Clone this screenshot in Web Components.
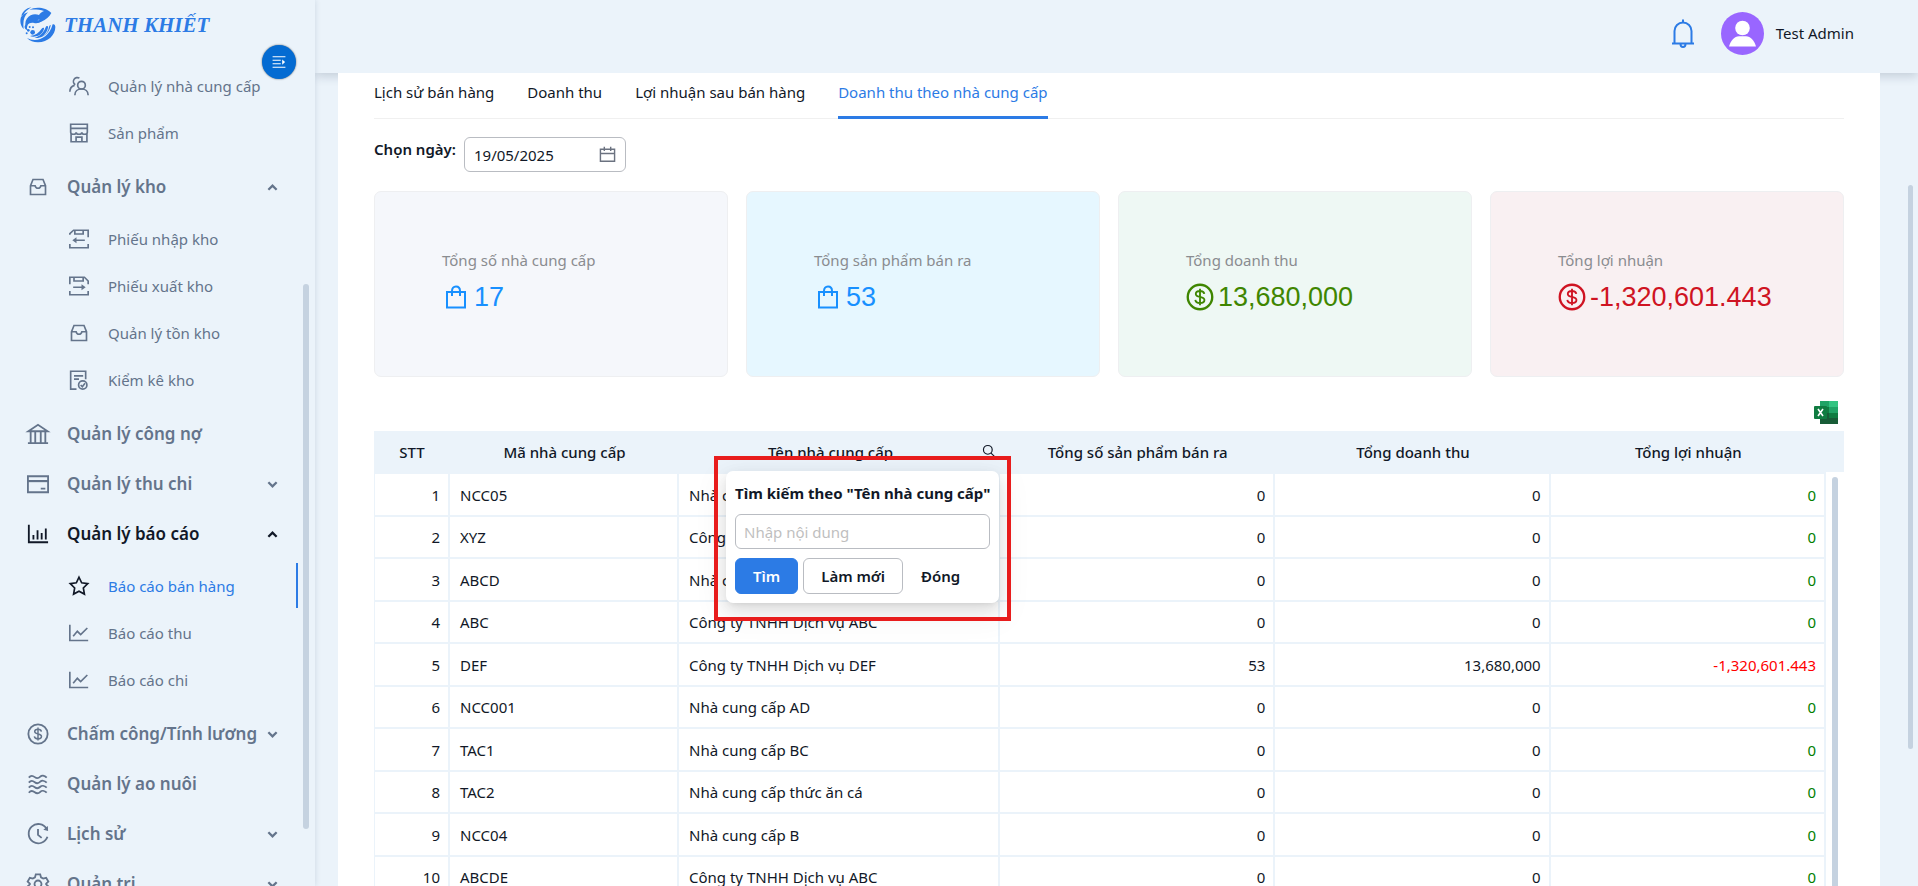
<!DOCTYPE html>
<html lang="vi">
<head>
<meta charset="utf-8">
<meta name="viewport" content="width=device-width, initial-scale=1">
<title>Doanh thu theo nhà cung cấp</title>
<style>
  body {
    margin: 0;
    font: 15px/22px "Noto Sans", "Open Sans", sans-serif;
    color: #111827;
    background: #ebf3fa;
  }
</style>
</head>
<body>
<app-shell>
  <app-sidebar slot="sidebar">
    <nav-item sub icon="team">Quản lý nhà cung cấp</nav-item>
    <nav-item sub icon="shop">Sản phẩm</nav-item>
    <nav-item icon="inbox" arrow="up">Quản lý kho</nav-item>
    <nav-item sub first icon="import">Phiếu nhập kho</nav-item>
    <nav-item sub icon="export">Phiếu xuất kho</nav-item>
    <nav-item sub icon="inbox">Quản lý tồn kho</nav-item>
    <nav-item sub icon="audit">Kiểm kê kho</nav-item>
    <nav-item icon="bank">Quản lý công nợ</nav-item>
    <nav-item icon="card" arrow="down">Quản lý thu chi</nav-item>
    <nav-item icon="bars" arrow="up" open>Quản lý báo cáo</nav-item>
    <nav-item sub first active icon="star">Báo cáo bán hàng</nav-item>
    <nav-item sub icon="line">Báo cáo thu</nav-item>
    <nav-item sub icon="line">Báo cáo chi</nav-item>
    <nav-item icon="dollar" arrow="down">Chấm công/Tính lương</nav-item>
    <nav-item icon="waves">Quản lý ao nuôi</nav-item>
    <nav-item icon="history" arrow="down">Lịch sử</nav-item>
    <nav-item icon="setting" arrow="down">Quản trị</nav-item>
  </app-sidebar>
  <app-header slot="header">Test Admin</app-header>

  <report-tabs>
    <a href="#history">Lịch sử bán hàng</a>
    <a href="#revenue">Doanh thu</a>
    <a href="#profit">Lợi nhuận sau bán hàng</a>
    <a href="#supplier" aria-current="page">Doanh thu theo nhà cung cấp</a>
  </report-tabs>
  <date-field value="19/05/2025">Chọn ngày</date-field>
  <stat-row>
    <stat-card icon="bag" value="17" tone="gray">Tổng số nhà cung cấp</stat-card>
    <stat-card icon="bag" value="53" tone="blue">Tổng sản phẩm bán ra</stat-card>
    <stat-card icon="dollar" value="13,680,000" tone="green">Tổng doanh thu</stat-card>
    <stat-card icon="dollar" value="-1,320,601.443" tone="red">Tổng lợi nhuận</stat-card>
  </stat-row>
  <supplier-table>
    <search-popup slot="search">Tên nhà cung cấp</search-popup>
  </supplier-table>
</app-shell>

<script>
  // 24x24 line icons
  const ICONS = {
    team: '<circle cx="15" cy="11" r="4.6"/><path d="M7 23c0-4.600 3.400-7.400 8-7.400s8 2.800 8 7.400M12.500 2.600A4.600 4.600 0 1 0 7.500 10.500M1 19c0-3.600 2.200-6.800 5.600-7.800"/>',
    shop: '<path d="M2 1.500h20v5H2zM2 6.500v4.500c0 1.500 1.400 2.500 3.300 2.500s3.300-1 3.300-2.500c0 1.500 1.500 2.500 3.400 2.500s3.400-1 3.400-2.500c0 1.500 1.400 2.500 3.300 2.500s3.300-1 3.300-2.500V6.500M2.500 13v9.500h19V13M8.500 22v-5h7v5"/>',
    inbox: '<path d="M3 10.500 6 3h12l3 7.500V21H3zM3 10.500h5.500c.5 2 1.800 3 3.500 3s3-1 3.500-3H21"/>',
    import: '<path d="M1 7V5.500L5.500 1.500H23V10M7 1.500v4.500h10V1.500M1 18v4.500h22V18M19 13.500H6"/><path d="m9 9.800-5 3.700 5 3.700z" fill="currentColor" stroke="none"/>',
    export: '<path d="M1 10V1.500h17.500L23 6V10M6 1.500v4.500h11V1.500M1 18v4.500h22V18M5 13.500h13"/><path d="m15 9.800 5 3.700-5 3.700z" fill="currentColor" stroke="none"/>',
    audit: '<path d="M9 23H2V1.500h18V11M6 7h11M6 11h6"/><circle cx="16.500" cy="18" r="5"/><path d="m14 18 2 2 3.200-4"/>',
    bank: '<path d="M1.500 9 12 2l10.500 7zM1 22h22M4 9v13M9 9v13M15 9v13M20 9v13"/>',
    card: '<path d="M1 3.500h22V21H1zM1 8.500h22M15 17h5" /><path d="M1 9h22"/>',
    bars: '<path d="M2 2v19h21M7 18v-5M11.500 18V8M16 18v-7M20.500 18V6"/>',
    star: '<path d="m12 1.500 3.200 6.700 7.300 1-5.300 5.200 1.300 7.300L12 18.200l-6.500 3.500 1.300-7.300L1.500 9.200l7.300-1z"/>',
    line: '<path d="M1 2v19h22M5 16l5-6 4 4 8-8"/>',
    dollar: '<circle cx="12" cy="12" r="10.500"/><path d="M12 5v14M15.700 9.300c-.3-1.500-1.700-2.400-3.700-2.400s-3.600 1-3.600 2.500c0 3.600 7.400 1.500 7.400 5.200 0 1.600-1.600 2.600-3.800 2.600s-3.800-1-4-2.700" stroke-width="1.600"/>',
    waves: '<path d="M2 5c2-2.500 4-2.500 6.500-.5s4.500 1 6-.5 4.500-1.500 7 1M2 10.500c2-2.500 4-2.500 6.500-.5s4.500 1 6-.5 4.500-1.500 7 1M2 16c2-2.500 4-2.500 6.500-.5s4.500 1 6-.5 4.500-1.500 7 1M2 21.500c2-2.500 4-2.500 6.500-.5s4.500 1 6-.5 4.500-1.500 7 1"/>',
    history: '<path d="M21.500 6.500A10.500 10.500 0 1 0 22.300 15M12 6.500V13l4 3.200"/><path d="m22.800 3.200.2 5.600-5.200-1.400z" fill="currentColor" stroke="none"/>',
    setting: '<circle cx="12" cy="12" r="3.800"/><path d="M9.600 1.500h4.800l.9 3.300 2.300 1.300 3.300-.9 2.400 4.100-2.400 2.400v.600l2.400 2.400-2.400 4.100-3.300-.9-2.300 1.300-.9 3.300H9.600l-.9-3.300-2.300-1.300-3.300.9-2.400-4.100 2.400-2.400v-.600L.7 9.300l2.400-4.100 3.300.9 2.300-1.300z"/>',
    up: '<path d="m3 17 9-9 9 9" stroke-width="5"/>',
    down: '<path d="m3 7 9 9 9-9" stroke-width="5"/>',
    bag: '<path d="M3 7h18v15.500H3zM8 11V6c0-2.800 1.600-4.500 4-4.500S16 3.200 16 6v5"/>',
    bell: '<path d="M1 21.500h22M3.500 21.500V9a8.500 8.500 0 0 1 17 0V21.500M12 1V-2.500M9.500 22a2.500 3 0 0 0 5 0"/>',
    menu: '<path d="M1 3h22M1 9h14M1 15h14M1 21h22"/><path d="m17.500 7.500 5 4.500-5 4.500z" fill="currentColor" stroke="none"/>',
    calendar: '<path d="M2 4.500h20v17H2zM2 10.500h20M7.500 1v6M16.500 1v6"/>',
    search: '<circle cx="10" cy="10" r="7.500"/><path d="m15.500 15.500 7 7"/>'
  };

  class UiIcon extends HTMLElement {
    constructor() {
      super();
      this.shadow = this.attachShadow({ mode: "open" });
    }

    connectedCallback() {
      this.shadow.innerHTML = `
        <style>
          :host { display: block; flex: none; width: 20px; height: 20px; }
          svg { display: block; width: 100%; height: 100%; overflow: visible; }
        </style>
        <svg viewBox="0 0 24 24" fill="none" stroke="currentColor" stroke-width="2" aria-hidden="true">${ICONS[this.getAttribute("name")]}</svg>`;
    }
  }
  customElements.define("ui-icon", UiIcon);


  class AppShell extends HTMLElement {
    constructor() {
      super();
      this.shadow = this.attachShadow({ mode: "open" });
      this.shadow.innerHTML = `
        <style>
          :host { display: flex; height: 100vh; overflow: hidden; }
          .page { flex: 1; min-width: 0; display: flex; flex-direction: column; }
          .scroll { position: relative; flex: 1; min-height: 0; overflow: hidden; padding: 0 38px 0 23px; }
          main { position: relative; z-index: 2; background: #fff; padding: 0 36px 40px; }
          .thumb {
            position: absolute; top: 112px; right: 5px;
            width: 5px; height: 564px; border-radius: 3px; background: #c5d2e0;
          }
        </style>
        <slot name="sidebar"></slot>
        <div class="page">
          <slot name="header"></slot>
          <div class="scroll">
            <main><slot></slot></main>
            <div class="thumb"></div>
          </div>
        </div>`;
    }
  }
  customElements.define("app-shell", AppShell);


  class AppSidebar extends HTMLElement {
    constructor() {
      super();
      this.shadow = this.attachShadow({ mode: "open" });
      this.shadow.innerHTML = `
        <style>
          :host {
            position: relative; z-index: 3; flex: none; width: 315px;
            display: flex; flex-direction: column;
            background: #ebf3fa; box-shadow: 0 0 6px rgba(15, 40, 80, .14);
          }
          .brand {
            display: flex; align-items: center; gap: 8px; height: 50px; flex: none;
            padding-left: 20px; color: #2c7be5; text-decoration: none;
            font: italic bold 21px/50px "Liberation Serif", serif;
          }
          .brand svg { width: 36px; height: 36px; }
          nav { flex: 1; min-height: 0; overflow: hidden; padding-top: 12px; }
          button {
            position: absolute; left: 262px; top: 45px; width: 34px; height: 34px; padding: 0;
            display: grid; place-items: center;
            border: 0; border-radius: 50%; color: #fff; background: #046bd2;
            box-shadow: 0 0 2px rgba(0, 0, 0, .6);
          }
          button ui-icon { width: 14px; height: 14px; }
          .thumb {
            position: absolute; left: 303px; top: 284px;
            width: 6px; height: 545px; border-radius: 3px; background: #c5d2e0;
          }
        </style>
        <a class="brand" href="#home">
          <svg viewBox="0 0 108 108" fill="currentColor" aria-hidden="true">
            <path d="M28 8C46-2 78 0 94 18c-6 12-16 20-30 26-6 3-11 4-15 3 5-3 8-6 9-10-6 4-11 5-15 4-11 0-20 4-27 13C15 40 22 30 32 25c9-5 18-4 25-1 3-5 8-9 15-12-14-5-30-5-44-4z"/>
            <path d="M4 27C8 14 18 3 34 1 23 8 14 14 10 24z"/>
            <path d="M3 30C10 22 16 18 24 16 12 28 8 43 11 66 1 56-1 42 3 30z"/>
            <path d="M14 58c4-12 14-20 28-20 9 0 15 4 23 1-5 9-14 11-23 9-10-2-18 2-20 9-2 5-1 9 2 13-7-1-11-6-10-12z"/>
            <circle cx="38" cy="76" r="7"/><circle cx="25" cy="70" r="4"/><circle cx="29" cy="60" r="3"/><circle cx="20" cy="79" r="3"/><circle cx="39" cy="61" r="3"/>
            <path d="M98 52c4-2 8 1 8 8 0 24-22 46-52 46-14 0-24-4-33-13 24 13 64 6 77-41z"/>
            <path d="M92 56c-5 24-24 38-49 37 17-5 28-16 34-32 2-5 8-6 7 1-2 10-8 19-17 26 12-6 18-16 20-28 1-5 6-8 5-4z"/>
            <path d="M72 65c-3 12-12 21-24 23-7 2-13 1-18-1 16-2 27-10 35-22 2-3 8-4 7 0z"/>
          </svg>
          <span>THANH KHIẾT</span>
        </a>
        <nav><slot></slot></nav>
        <button aria-label="Thu gọn menu"><ui-icon name="menu"></ui-icon></button>
        <div class="thumb"></div>`;
    }
  }
  customElements.define("app-sidebar", AppSidebar);


  class NavItem extends HTMLElement {
    constructor() {
      super();
      this.shadow = this.attachShadow({ mode: "open" });
    }

    connectedCallback() {
      const arrow = this.getAttribute("arrow");
      const tag = arrow ? "button" : "a";
      this.shadow.innerHTML = `
        <style>
          :host { display: block; color: #64748b; }
          :host([first]) { margin-top: 3px; }
          :host([open]) { color: #111827; }
          a, button {
            box-sizing: border-box; width: 298px; height: 50px; padding: 0 20px 0 27px;
            display: flex; align-items: center; text-align: left;
            border: 0; background: none; color: inherit; text-decoration: none;
            font: 600 17px/24px "Noto Sans", "Open Sans", sans-serif;
          }
          .icon { width: 22px; height: 22px; margin-right: 18px; }
          .label { flex: 1; white-space: nowrap; }
          .arrow { width: 11px; height: 11px; }
          :host([sub]) a { height: 47px; padding-left: 69px; font-size: 15px; font-weight: 400; }
          :host([sub]) .icon { width: 20px; height: 20px; margin-right: 19px; }
          :host([active]) .icon { color: #111827; }
          :host([active]) a { color: #2c7be5; background: linear-gradient(#2c7be5, #2c7be5) right center / 2px 45px no-repeat; }
          :host([icon="inbox"]) .icon { padding: 0 1px; width: 20px; height: 20px; }
          :host([sub][icon="inbox"]) .icon { padding: 0; }
        </style>
        <${tag} ${arrow ? "" : 'href="#"'}>
          <ui-icon class="icon" name="${this.getAttribute("icon")}"></ui-icon>
          <span class="label"><slot></slot></span>
          ${arrow ? `<ui-icon class="arrow" name="${arrow}"></ui-icon>` : ""}
        </${tag}>`;
      // a closing gap after the last entry of a submenu
      const prev = this.previousElementSibling;
      if (prev && prev.hasAttribute("sub") && !this.hasAttribute("sub")) this.style.marginTop = "6px";
    }
  }
  customElements.define("nav-item", NavItem);


  class AppHeader extends HTMLElement {
    constructor() {
      super();
      this.shadow = this.attachShadow({ mode: "open" });
      this.shadow.innerHTML = `
        <style>
          :host {
            position: relative; z-index: 1; flex: none; box-sizing: border-box; height: 73px;
            display: flex; align-items: flex-start; justify-content: flex-end;
            padding: 12px 64px 0 0; background: #ebf3fa;
            box-shadow: 0 3px 10px rgba(30, 50, 80, .2);
          }
          button { border: 0; padding: 0; background: none; color: #2c7be5; margin: 7px 26px 0 0; }
          button ui-icon { width: 24px; height: 30px; }
          .avatar { width: 43px; height: 43px; margin-right: 12px; }
          .name { line-height: 43px; }
        </style>
        <button aria-label="Thông báo"><ui-icon name="bell"></ui-icon></button>
        <svg class="avatar" viewBox="0 0 43 43" aria-hidden="true">
          <circle cx="21.500" cy="21.500" r="21.500" fill="#9966ff"/>
          <circle cx="21.500" cy="16" r="7.300" fill="#fff"/>
          <path d="M8 34.500c1.500-6 5.500-10.300 10-10.300h7c4.500 0 8.500 4.300 10 10.300z" fill="#fff"/>
        </svg>
        <span class="name"><slot></slot></span>`;
    }
  }
  customElements.define("app-header", AppHeader);


  class ReportTabs extends HTMLElement {
    constructor() {
      super();
      this.shadow = this.attachShadow({ mode: "open" });
      this.shadow.innerHTML = `
        <style>
          :host { display: flex; gap: 33px; height: 46px; box-shadow: inset 0 -1px #f0f0f0; }
          ::slotted(a) {
            box-sizing: border-box; padding-top: 8px; color: #111827;
            text-decoration: none; white-space: nowrap;
          }
          ::slotted(a[aria-current]) { color: #2c7be5; border-bottom: 3px solid #2c7be5; }
        </style>
        <slot></slot>`;
    }
  }
  customElements.define("report-tabs", ReportTabs);


  class DateField extends HTMLElement {
    constructor() {
      super();
      this.shadow = this.attachShadow({ mode: "open" });
    }

    connectedCallback() {
      this.shadow.innerHTML = `
        <style>
          :host { display: flex; gap: 8px; margin-top: 18px; }
          label { font-weight: 600; line-height: 24px; }
          .box {
            box-sizing: border-box; width: 162px; height: 35px; padding: 0 9px;
            display: flex; align-items: center;
            border: 1px solid #b9bcc2; border-radius: 6px; background: #fff;
          }
          input {
            flex: 1; min-width: 0; border: 0; padding: 0; outline: 0; background: none;
            font: 15px/22px "Noto Sans", "Open Sans", sans-serif; color: inherit;
          }
          ui-icon { width: 17px; height: 17px; color: #6b7280; }
        </style>
        <label for="date"><slot></slot>:</label>
        <div class="box">
          <input id="date" type="text" value="${this.getAttribute("value")}">
          <ui-icon name="calendar"></ui-icon>
        </div>`;
    }
  }
  customElements.define("date-field", DateField);


  class StatRow extends HTMLElement {
    constructor() {
      super();
      this.shadow = this.attachShadow({ mode: "open" });
      this.shadow.innerHTML = `
        <style>
          :host { display: grid; grid-template-columns: repeat(4, 1fr); gap: 18px; margin-top: 19px; }
        </style>
        <slot></slot>`;
    }
  }
  customElements.define("stat-row", StatRow);


  class StatCard extends HTMLElement {
    constructor() {
      super();
      this.shadow = this.attachShadow({ mode: "open" });
    }

    connectedCallback() {
      this.shadow.innerHTML = `
        <style>
          :host {
            box-sizing: border-box; height: 186px; padding: 57px 66px 0 67px;
            border: 1px solid #eeeff1; border-radius: 7px; background: #f5f7fb; color: #1890ff;
          }
          :host([tone="blue"]) { background: #e6f7ff; }
          :host([tone="green"]) { background: #eef8f4; color: #3f8600; }
          :host([tone="red"]) { background: #f9f0f2; color: #cf1322; }
          .label { color: #8a8c90; }
          .value {
            display: flex; align-items: center; gap: 4px; margin-top: 7px;
            font: 27px/38px "Liberation Sans", Arial, sans-serif;
          }
          ui-icon { width: 28px; height: 28px; }
          :host([icon="bag"]) ui-icon { box-sizing: border-box; padding: 2px; }
        </style>
        <div class="label"><slot></slot></div>
        <div class="value">
          <ui-icon name="${this.getAttribute("icon")}"></ui-icon>
          <span>${this.getAttribute("value")}</span>
        </div>`;
    }
  }
  customElements.define("stat-card", StatCard);


  class SupplierTable extends HTMLElement {
    constructor() {
      super();
      this.shadow = this.attachShadow({ mode: "open" });
      this._data = [
        ["NCC05", "Nhà cung cấp E"],
        ["XYZ", "Công ty XYZ"],
        ["ABCD", "Nhà cung cấp D"],
        ["ABC", "Công ty TNHH Dịch vụ ABC"],
        ["DEF", "Công ty TNHH Dịch vụ DEF", "53", "13,680,000", "-1,320,601.443"],
        ["NCC001", "Nhà cung cấp AD"],
        ["TAC1", "Nhà cung cấp BC"],
        ["TAC2", "Nhà cung cấp thức ăn cá"],
        ["NCC04", "Nhà cung cấp B"],
        ["ABCDE", "Công ty TNHH Dịch vụ ABC"]
      ];
    }

    connectedCallback() {
      this.render();
    }

    render() {
      const rows = this._data.map(([code, name, sold = "0", revenue = "0", profit = "0"], i) => `
        <tr>
          <td class="num">${i + 1}</td>
          <td>${code}</td>
          <td>${name}</td>
          <td class="num">${sold}</td>
          <td class="num">${revenue}</td>
          <td class="num ${profit.startsWith("-") ? "loss" : "gain"}">${profit}</td>
          <td class="gutter"></td>
        </tr>`).join("");

      this.shadow.innerHTML = `
        <style>
          :host { display: block; margin-top: 23px; }
          .tools { display: flex; justify-content: flex-end; padding: 0 5px 5px; }
          .tools button { border: 0; padding: 0; background: none; }
          .tools svg { display: block; width: 26px; height: 26px; }
          .wrap { position: relative; }
          table {
            width: 100%; table-layout: fixed;
            border-collapse: separate; border-spacing: 0; font-size: 15px;
          }
          .c1 { width: 76px; } .c2 { width: 229px; } .c3 { width: 321px; } .c7 { width: 18px; }
          th {
            box-sizing: border-box; height: 43px; padding: 0; font-weight: 500;
            background: #ebf3fa; background-clip: padding-box; border-bottom: 2px solid #ebf3fa;
          }
          th.find { position: relative; padding-right: 18px; }
          th:last-child { border-bottom-color: #fff; }
          .find button {
            position: absolute; right: 4px; top: 13px; border: 0; padding: 0;
            background: none; color: #111827;
          }
          .find ui-icon { width: 14px; height: 14px; }
          ::slotted(search-popup) { position: absolute; right: 1px; top: 40px; z-index: 2; }
          td {
            box-sizing: border-box; height: 42px; padding: 0 10px;
            border-bottom: 2px solid #ebf3fa; border-right: 2px solid #ebf3fa;
            white-space: nowrap;
          }
          tr:nth-child(odd) td { height: 43px; }
          td:first-child { border-left: 1px solid #ebf3fa; }
          td.num { text-align: right; padding-right: 8px; }
          td.gutter { border: 0; padding: 0; }
          .gain { color: #008000; }
          .loss { color: #ff0000; }
          .thumb {
            position: absolute; right: 6px; top: 46px; bottom: 0;
            width: 6px; border-radius: 3px; background: #c5d2e0;
          }
        </style>
        <div class="tools">
          <button aria-label="Xuất Excel">
            <svg viewBox="0 0 26 26" aria-hidden="true">
              <path fill="#21a366" d="M7 1h10v6H7z"/><path fill="#33c481" d="M16 1h9v6h-9z"/>
              <path fill="#107c41" d="M7 7h9v6H7z"/><path fill="#21a366" d="M16 7h9v6h-9z"/>
              <path fill="#185c37" d="M7 13h9v6H7z"/><path fill="#107c41" d="M16 13h9v6h-9z"/>
              <path fill="#185c37" d="M7 18h18v6H7z"/>
              <rect x="1" y="6" width="13" height="13" rx="1" fill="#107c41"/>
              <path d="m5 9 5 7M10 9l-5 7" stroke="#fff" stroke-width="1.600"/>
            </svg>
          </button>
        </div>
        <div class="wrap">
          <table>
            <colgroup><col class="c1"><col class="c2"><col class="c3"><col><col><col><col class="c7"></colgroup>
            <thead>
              <tr>
                <th>STT</th>
                <th>Mã nhà cung cấp</th>
                <th class="find">
                  Tên nhà cung cấp
                  <button aria-label="Tìm kiếm"><ui-icon name="search"></ui-icon></button>
                  <slot name="search"></slot>
                </th>
                <th>Tổng số sản phẩm bán ra</th>
                <th>Tổng doanh thu</th>
                <th>Tổng lợi nhuận</th>
                <th></th>
              </tr>
            </thead>
            <tbody>${rows}</tbody>
          </table>
          <div class="thumb"></div>
        </div>`;
    }
  }
  customElements.define("supplier-table", SupplierTable);


  class SearchPopup extends HTMLElement {
    constructor() {
      super();
      this.shadow = this.attachShadow({ mode: "open" });
      this.shadow.innerHTML = `
        <style>
          :host {
            box-sizing: border-box; width: 273px; padding: 11px 9px 9px; text-align: left;
            border-radius: 7px; background: #fff; font-size: 15px; color: #111827;
            box-shadow: 0 6px 16px rgba(0, 0, 0, .1), 0 3px 6px -4px rgba(0, 0, 0, .14), 0 9px 28px 8px rgba(0, 0, 0, .05);
          }
          label { display: block; font-weight: 700; white-space: nowrap; }
          input {
            box-sizing: border-box; width: 100%; height: 35px; margin: 10px 0 9px; padding: 0 8px;
            display: block; border: 1px solid #b9bcc2; border-radius: 6px;
            font: 15px/22px "Noto Sans", "Open Sans", sans-serif;
          }
          input::placeholder { color: #bfbfbf; }
          .actions { display: flex; gap: 5px; }
          button {
            box-sizing: border-box; height: 36px; padding: 0 17px;
            border: 1px solid #b9bcc2; border-radius: 6px; background: #fff; color: inherit;
            font: 600 15px/22px "Noto Sans", "Open Sans", sans-serif;
          }
          .primary { background: #2c7be5; border-color: #2c7be5; color: #fff; }
          .plain { border-color: transparent; padding: 0 12px; }
          /* highlight frame around the popup */
          .frame {
            position: absolute; top: -15px; right: -12px; bottom: -18px; left: -12px;
            border: 4px solid #e81c1c; pointer-events: none;
          }
        </style>
        <label for="keyword">Tìm kiếm theo "<slot></slot>"</label>
        <input id="keyword" type="text" placeholder="Nhập nội dung">
        <div class="actions">
          <button class="primary">Tìm</button>
          <button>Làm mới</button>
          <button class="plain">Đóng</button>
        </div>
        <div class="frame"></div>`;
    }
  }
  customElements.define("search-popup", SearchPopup);
</script>
</body>
</html>
